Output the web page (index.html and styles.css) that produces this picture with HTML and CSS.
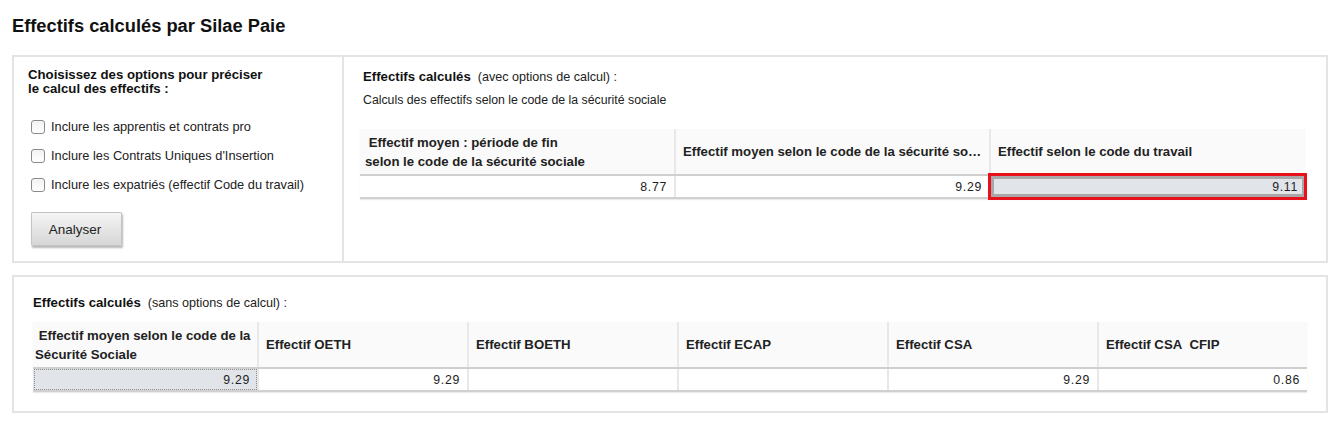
FILE: index.html
```html
<!DOCTYPE html>
<html lang="fr">
<head>
<meta charset="utf-8">
<title>Effectifs calculés par Silae Paie</title>
<link rel="stylesheet" href="styles.css">
</head>
<body>
<h1 class="title">Effectifs calculés par Silae Paie</h1>

<section class="panel panel-top">
  <div class="options">
    <p class="options-title">Choisissez des options pour préciser<br>le calcul des effectifs :</p>
    <label class="check"><span class="box"></span>Inclure les apprentis et contrats pro</label>
    <label class="check"><span class="box"></span>Inclure les Contrats Uniques d'Insertion</label>
    <label class="check"><span class="box"></span>Inclure les expatriés (effectif Code du travail)</label>
    <button class="btn" type="button">Analyser</button>
  </div>
  <div class="results">
    <p class="res-title"><b>Effectifs calculés</b>&nbsp; (avec options de calcul) :</p>
    <p class="res-sub">Calculs des effectifs selon le code de la sécurité sociale</p>
    <table class="grid grid-top">
      <colgroup><col class="c315"><col class="c315"><col class="c315"></colgroup>
      <thead>
        <tr>
          <th>&nbsp;Effectif moyen : période de fin<br>selon le code de la sécurité sociale</th>
          <th><span class="ell">Effectif moyen selon le code de la sécurité sociale</span></th>
          <th>Effectif selon le code du travail</th>
        </tr>
      </thead>
      <tbody>
        <tr>
          <td>8.77</td>
          <td>9.29</td>
          <td class="sel red">9.11</td>
        </tr>
      </tbody>
    </table>
  </div>
</section>

<section class="panel panel-bottom">
  <p class="res-title"><b>Effectifs calculés</b>&nbsp; (sans options de calcul) :</p>
  <table class="grid grid-bottom">
    <colgroup><col class="c225"><col class="c210"><col class="c210"><col class="c210"><col class="c210"><col class="c209"></colgroup>
    <thead>
      <tr>
        <th class="first">&nbsp;Effectif moyen selon le code de la<br>Sécurité Sociale</th>
        <th>Effectif OETH</th>
        <th>Effectif BOETH</th>
        <th>Effectif ECAP</th>
        <th>Effectif CSA</th>
        <th>Effectif CSA&nbsp; CFIP</th>
      </tr>
    </thead>
    <tbody>
      <tr>
        <td class="sel">9.29</td>
        <td>9.29</td>
        <td></td>
        <td></td>
        <td>9.29</td>
        <td>0.86</td>
      </tr>
    </tbody>
  </table>
</section>
</body>
</html>
```

FILE: styles.css
```css
* { box-sizing: border-box; }

body {
  margin: 0;
  padding: 15px 14px 0 12px;
  font-family: "Liberation Sans", Arial, sans-serif;
  font-size: 12.3px;
  color: #1a1a1a;
  background: #fff;
}

p { margin: 0; }

.title {
  margin: 0 0 18px 0;
  font-size: 18.3px;
  font-weight: bold;
  line-height: 22px;
  color: #111;
}

.panel {
  border: 2px solid #e4e4e4;
  width: 1316px;
  background: #fff;
}

.panel-top {
  display: flex;
  height: 208px;
}

.options {
  width: 330px;
  border-right: 2px solid #e4e4e4;
  padding: 11px 0 0 14px;
  display: flex;
  flex-direction: column;
}

.options-title {
  font-weight: bold;
  font-size: 13.2px;
  line-height: 14px;
  color: #111;
  margin-bottom: 16px;
}

.check {
  display: flex;
  align-items: center;
  gap: 6px;
  height: 29px;
  font-size: 12.8px;
  color: #222;
  padding-left: 3px;
}

.box {
  width: 14px;
  height: 14px;
  border: 1px solid #8a8a8a;
  border-radius: 3px;
  background: linear-gradient(#f2f2f2, #ffffff);
}

.btn {
  margin-top: 13px;
  margin-left: 3px;
  width: 91px;
  height: 34px;
  border: 1px solid #c4c4c4;
  border-radius: 1px;
  background: linear-gradient(#f5f5f5, #d6d6d6);
  box-shadow: 1px 2px 2px rgba(0,0,0,0.28);
  font-family: "Liberation Sans", Arial, sans-serif;
  font-size: 13.5px;
  color: #222;
  padding: 0 3px 0 0;
}

.results {
  flex: 1;
  padding: 12px 0 0 16px;
}

.res-title {
  font-size: 12.6px;
  line-height: 16px;
  color: #222;
}
.results .res-title,
.results .res-sub { padding-left: 3px; }
.res-title b { color: #111; font-size: 13.2px; }

.res-sub {
  margin-top: 7px;
  line-height: 16px;
  color: #222;
}

.grid {
  border-collapse: collapse;
  table-layout: fixed;
  font-size: 12.3px;
  box-shadow: 0 1px 1px rgba(0,0,0,0.08);
}

.grid th {
  background: #fafafa;
  text-align: left;
  font-weight: bold;
  font-size: 13.2px;
  color: #222;
  height: 46px;
  padding: 0 7px;
  line-height: 19px;
  border-left: 2px solid #e8e8e8;
  border-bottom: 2px solid #cfcfcf;
  vertical-align: middle;
  white-space: nowrap;
  overflow: hidden;
}
.grid th:first-child { border-left: none; padding-left: 5px; }

.grid td {
  height: 23px;
  padding: 0 7px;
  text-align: right;
  letter-spacing: 0.7px;
  color: #222;
  border-left: 2px solid #e8e8e8;
  border-bottom: 2px solid #d0d0d0;
  background: #fff;
}
.grid td:first-child { border-left: none; }

.ell {
  display: block;
  overflow: hidden;
  text-overflow: ellipsis;
  white-space: nowrap;
}

.grid-top { width: 945px; margin-top: 21px; }
.c315 { width: 315px; }

.grid td.sel {
  background: #e1e5e9;
  outline: 1px dotted #8c8c8c;
  outline-offset: -2px;
}
.grid td.red {
  outline: 3px solid #e8101a;
  outline-offset: -1px;
  box-shadow: inset 0 0 0 3px #a8a8a8;
}

.panel-bottom {
  margin-top: 12px;
  height: 138px;
  padding: 18px 0 0 19px;
}

.grid-bottom { width: 1274px; margin-top: 11px; }
.c225 { width: 225px; }
.c210 { width: 210px; }
.c209 { width: 209px; }
.grid-bottom th.first { padding-left: 2px; }
```
